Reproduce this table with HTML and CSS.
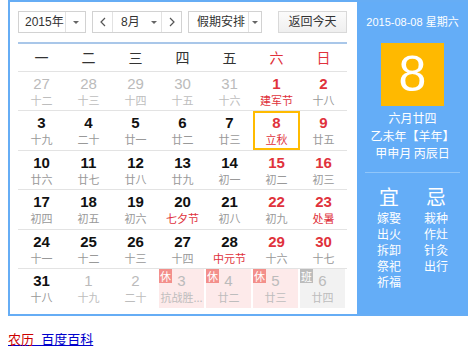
FILE: index.html
```html
<!DOCTYPE html>
<html lang="zh-CN">
<head>
<meta charset="utf-8">
<title>万年历</title>
<link rel="stylesheet" href="styles.css">
</head>
<body>
<div class="cal">
  <div class="main">
    <div class="toolbar">
      <div class="sel year"><span class="val">2015年</span><span class="arr"><i class="tri"></i></span></div>
      <div class="sel month">
        <span class="nav"><svg width="6" height="10" viewBox="0 0 6 10"><path d="M5 1 L1 5 L5 9" fill="none" stroke="#555" stroke-width="1.2"/></svg></span>
        <span class="val mid">8月<i class="tri"></i></span>
        <span class="nav"><svg width="6" height="10" viewBox="0 0 6 10"><path d="M1 1 L5 5 L1 9" fill="none" stroke="#555" stroke-width="1.2"/></svg></span>
      </div>
      <div class="sel holiday"><span class="val">假期安排</span><span class="arr"><i class="tri"></i></span></div>
      <div class="today">返回今天</div>
    </div>
    <div class="grid">
      <div class="week">
        <span>一</span><span>二</span><span>三</span><span>四</span><span>五</span><span class="red">六</span><span class="red">日</span>
      </div>
      <div class="row">
        <div class="cell dim"><b>27</b><small>十二</small></div>
        <div class="cell dim"><b>28</b><small>十三</small></div>
        <div class="cell dim"><b>29</b><small>十四</small></div>
        <div class="cell dim"><b>30</b><small>十五</small></div>
        <div class="cell dim"><b>31</b><small>十六</small></div>
        <div class="cell wkd fest"><b>1</b><small>建军节</small></div>
        <div class="cell wkd"><b>2</b><small>十八</small></div>
      </div>
      <div class="row">
        <div class="cell"><b>3</b><small>十九</small></div>
        <div class="cell"><b>4</b><small>二十</small></div>
        <div class="cell"><b>5</b><small>廿一</small></div>
        <div class="cell"><b>6</b><small>廿二</small></div>
        <div class="cell"><b>7</b><small>廿三</small></div>
        <div class="cell wkd fest cur"><b>8</b><small>立秋</small></div>
        <div class="cell wkd"><b>9</b><small>廿五</small></div>
      </div>
      <div class="row">
        <div class="cell"><b>10</b><small>廿六</small></div>
        <div class="cell"><b>11</b><small>廿七</small></div>
        <div class="cell"><b>12</b><small>廿八</small></div>
        <div class="cell"><b>13</b><small>廿九</small></div>
        <div class="cell"><b>14</b><small>初一</small></div>
        <div class="cell wkd"><b>15</b><small>初二</small></div>
        <div class="cell wkd"><b>16</b><small>初三</small></div>
      </div>
      <div class="row">
        <div class="cell"><b>17</b><small>初四</small></div>
        <div class="cell"><b>18</b><small>初五</small></div>
        <div class="cell"><b>19</b><small>初六</small></div>
        <div class="cell fest"><b>20</b><small>七夕节</small></div>
        <div class="cell"><b>21</b><small>初八</small></div>
        <div class="cell wkd"><b>22</b><small>初九</small></div>
        <div class="cell wkd fest"><b>23</b><small>处暑</small></div>
      </div>
      <div class="row">
        <div class="cell"><b>24</b><small>十一</small></div>
        <div class="cell"><b>25</b><small>十二</small></div>
        <div class="cell"><b>26</b><small>十三</small></div>
        <div class="cell"><b>27</b><small>十四</small></div>
        <div class="cell fest"><b>28</b><small>中元节</small></div>
        <div class="cell wkd"><b>29</b><small>十六</small></div>
        <div class="cell wkd"><b>30</b><small>十七</small></div>
      </div>
      <div class="row last">
        <div class="cell"><b>31</b><small>十八</small></div>
        <div class="cell dim"><b>1</b><small>十九</small></div>
        <div class="cell dim"><b>2</b><small>二十</small></div>
        <div class="cell dim rest"><i class="badge">休</i><b>3</b><small>抗战胜...</small></div>
        <div class="cell dim rest"><i class="badge">休</i><b>4</b><small>廿二</small></div>
        <div class="cell dim rest"><i class="badge">休</i><b>5</b><small>廿三</small></div>
        <div class="cell dim work"><i class="badge">班</i><b>6</b><small>廿四</small></div>
      </div>
    </div>
  </div>
  <div class="side">
    <div class="date">2015-08-08 星期六</div>
    <div class="bigday">8</div>
    <div class="lunar">
      <div>六月廿四</div>
      <div>乙未年【羊年】</div>
      <div>甲申月 丙辰日</div>
    </div>
    <div class="divider"></div>
    <div class="yiji">
      <div class="col">
        <div class="head">宜</div>
        <div>嫁娶</div><div>出火</div><div>拆卸</div><div>祭祀</div><div>祈福</div>
      </div>
      <div class="col">
        <div class="head">忌</div>
        <div>栽种</div><div>作灶</div><div>针灸</div><div>出行</div>
      </div>
    </div>
  </div>
</div>
<p class="source"><a href="#"><em>农历</em>_百度百科</a></p>
</body>
</html>
```
FILE: styles.css
```css
body {
  margin: 0 0 0 8px;
  font-family: "Liberation Sans", "Noto Sans CJK SC", sans-serif;
  color: #333;
  background: #fff;
}

.cal {
  display: flex;
  width: 460px;
  height: 316px;
  box-sizing: border-box;
  border: 2px solid #66adf5;
  border-right: 0;
}

.main {
  width: 347px;
  flex: none;
  background: #fff;
  padding: 9px 0 0 8px;
  box-sizing: border-box;
}

.toolbar {
  display: flex;
  height: 22px;
  font-size: 12px;
  font-family: "Liberation Sans", "Noto Sans CJK SC", sans-serif;
  white-space: nowrap;
}

.sel {
  display: flex;
  box-sizing: border-box;
  border: 1px solid #d2d2d2;
  background: #fff;
  height: 22px;
  line-height: 20px;
}

.sel .val {
  padding-left: 8px;
  box-sizing: border-box;
  white-space: nowrap;
}

.sel .arr {
  border-left: 1px solid #e2e2e2;
  display: flex;
  align-items: center;
  justify-content: center;
  box-sizing: border-box;
}

.tri {
  display: inline-block;
  width: 0;
  height: 0;
  border-left: 3px solid transparent;
  border-right: 3px solid transparent;
  border-top: 3px solid #666;
  vertical-align: middle;
}

.year {
  width: 68px;
  margin-right: 6px;
}
.year .val { width: 46px; padding-left: 6px; }
.year .arr { width: 20px; }

.month {
  width: 90px;
  margin-right: 6px;
}
.month .nav {
  width: 19px;
  display: flex;
  align-items: center;
  justify-content: center;
}
.month .mid {
  width: 50px;
  border-left: 1px solid #e2e2e2;
  border-right: 1px solid #e2e2e2;
  padding-left: 8px;
  display: flex;
  align-items: center;
  gap: 11px;
}

.holiday {
  width: 74px;
}
.holiday .val { width: 59px; padding-left: 8px; }
.holiday .arr { width: 13px; }

.today {
  margin-left: 16px;
  width: 69px;
  height: 22px;
  box-sizing: border-box;
  border: 1px solid #d9d9d9;
  background: linear-gradient(#fbfbfb, #efefef);
  text-align: center;
  line-height: 20px;
}

.grid {
  width: 329px;
  margin-top: 9px;
  border-top: 2px solid #a9c7e9;
}

.week {
  display: grid;
  grid-template-columns: repeat(7, 47px);
  height: 27px;
  line-height: 27px;
  text-align: center;
  font-size: 14px;
  font-family: "Noto Sans CJK SC", sans-serif;
  border-bottom: 1px solid #e3e3e3;
}

.red { color: #e0323c; }

.row {
  display: grid;
  grid-template-columns: repeat(7, 47px);
  height: 39.4px;
  box-sizing: border-box;
  border-bottom: 1px solid #e3e3e3;
}
.row.last { border-bottom: 0; }

.cell {
  position: relative;
  display: flex;
  flex-direction: column;
  align-items: center;
  padding-top: 3px;
  box-sizing: border-box;
}

.cell b {
  font-size: 15px;
  line-height: 18px;
  font-weight: bold;
  color: #111;
}

.cell small {
  font-size: 11px;
  line-height: 14px;
  color: #999;
  font-family: "Noto Sans CJK SC", sans-serif;
  white-space: nowrap;
}

.cell.dim b { color: #bbb; font-weight: normal; }
.cell.dim small { color: #bdbdbd; }
.cell.wkd b { color: #e0323c; }
.cell.fest small { color: #e0323c; }

.cell.cur {
  box-shadow: inset 0 0 0 2px #ffbb00;
}

.cell.rest {
  background: #fdeaea;
  border-right: 2px solid #fff;
  background-clip: padding-box;
}
.cell.work {
  background: #f2f2f2;
  border-right: 2px solid #fff;
  background-clip: padding-box;
}

.badge {
  position: absolute;
  left: 0;
  top: 0;
  width: 13px;
  height: 14px;
  line-height: 14px;
  font-size: 11px;
  font-style: normal;
  text-align: center;
  color: #fff;
  background: #f38f8b;
  font-family: "Noto Sans CJK SC", sans-serif;
}
.work .badge { background: #bcbcbc; }

.side {
  flex: 1;
  background: #64adf7;
  color: #fff;
  padding-top: 12px;
  text-align: center;
  font-size: 12px;
  font-family: "Noto Sans CJK SC", sans-serif;
}

.date {
  line-height: 16px;
  font-size: 11px;
  font-family: "Liberation Sans", "Noto Sans CJK SC", sans-serif;
}

.bigday {
  width: 63px;
  height: 63px;
  margin: 13px auto 0;
  background: #ffb900;
  font-family: "Liberation Sans", sans-serif;
  font-size: 50px;
  line-height: 63px;
}

.lunar {
  margin-top: 3px;
  line-height: 17.5px;
}

.divider {
  width: 95px;
  height: 1px;
  margin: 10px auto 0;
  background: #90c6fa;
}

.yiji {
  display: flex;
  justify-content: center;
  margin-top: 12px;
}

.yiji .col {
  width: 47px;
  line-height: 16px;
}

.yiji .head {
  font-size: 20px;
  line-height: 24px;
  margin-bottom: 1px;
}

.source {
  margin: 15px 0 0;
  font-size: 13px;
  line-height: 16px;
  font-family: "Noto Sans CJK SC", sans-serif;
}
.source a { color: #0000cc; }
.source em { font-style: normal; color: #cc0000; }
```
